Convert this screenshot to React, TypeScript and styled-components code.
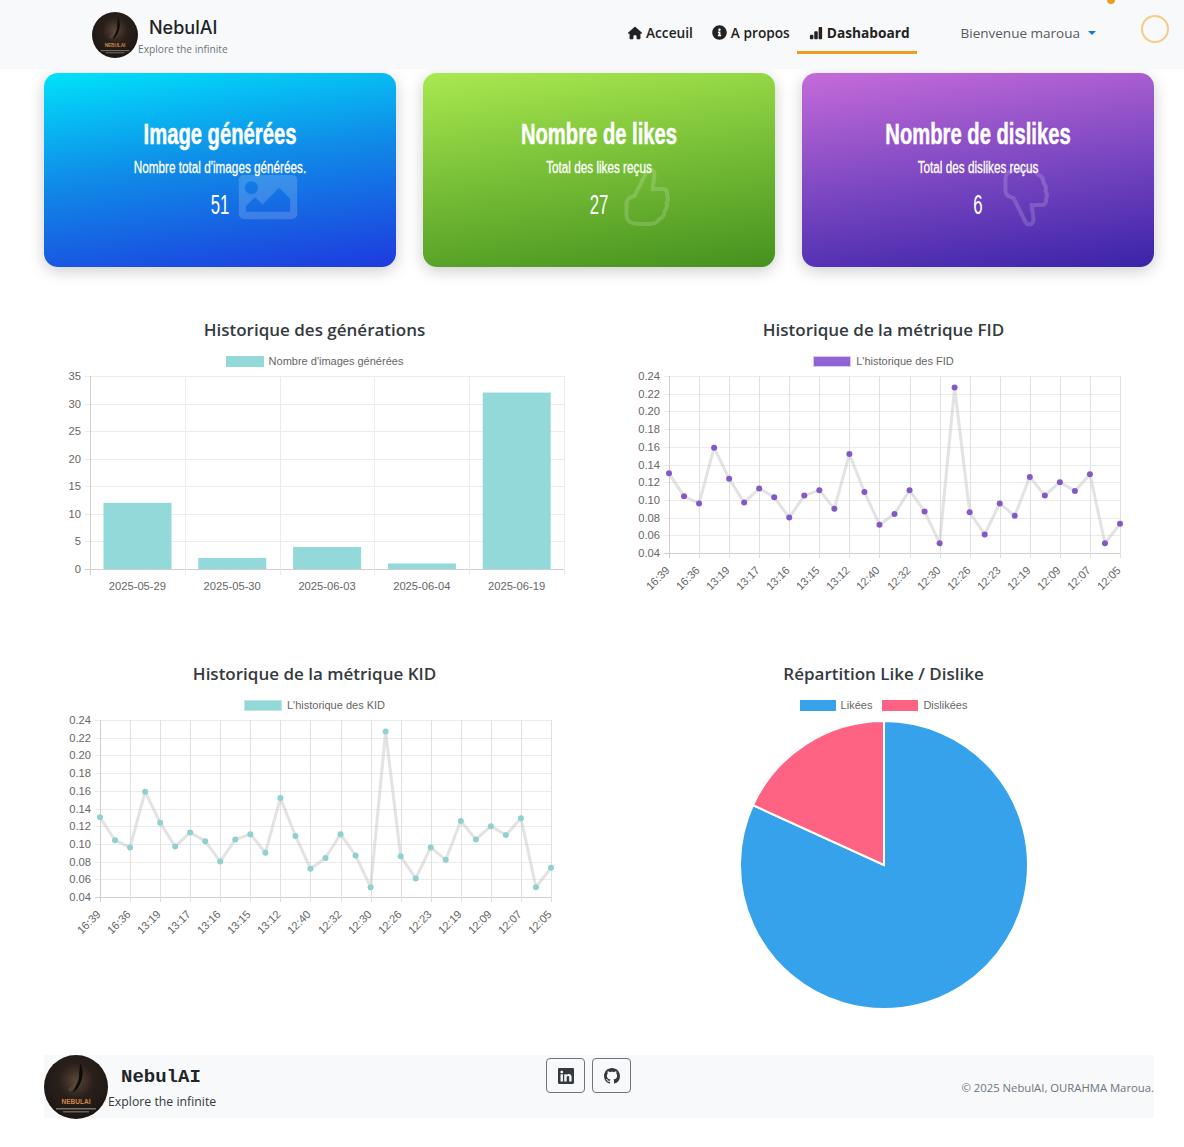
import React from "react";
import styled, { createGlobalStyle } from "styled-components";
import { FaInfoCircle, FaImage } from "react-icons/fa";
import { FaHouse } from "react-icons/fa6";
import { BsLinkedin, BsGithub, BsBarChartFill } from "react-icons/bs";

// #region ##################################################################################### DATA
const METRIC_LABELS = [
  "16:39", "16:36", "13:19", "13:17", "13:16", "13:15", "13:12", "12:40",
  "12:32", "12:30", "12:26", "12:23", "12:19", "12:09", "12:07", "12:05",
];
const METRIC_VALUES = [
  0.13, 0.104, 0.096, 0.159, 0.124, 0.097, 0.113, 0.103, 0.08, 0.105, 0.111, 0.09, 0.152, 0.109,
  0.072, 0.084, 0.111, 0.087, 0.051, 0.227, 0.086, 0.061, 0.096, 0.082, 0.126, 0.105, 0.12, 0.11,
  0.129, 0.051, 0.073,
];
const DAILY = [
  { label: "2025-05-29", value: 12 },
  { label: "2025-05-30", value: 2 },
  { label: "2025-06-03", value: 4 },
  { label: "2025-06-04", value: 1 },
  { label: "2025-06-19", value: 32 },
];
const TEAL = "#94d9d9";
const PURPLE = "#9063d6";
// #endregion

// #region ##################################################################################### STYLES
const GlobalStyle = createGlobalStyle`
  html, body { margin: 0; padding: 0; background: #fff; }
  * { box-sizing: border-box; }
  body { font-family: "Noto Sans", sans-serif; height: 1147px; overflow: hidden; }
`;

const Navbar = styled.nav`
  position: relative;
  height: 69px;
  background: #f8f9fa;
  display: flex;
  align-items: center;
  padding: 0 15px 1px 92px;
  white-space: nowrap;
`;

const Brand = styled.div`
  display: flex;
  align-items: center;
  flex: none;
  width: 524px;
  margin-top: 1px;
`;

const BrandText = styled.div`
  display: flex;
  flex-direction: column;
  align-items: flex-start;
  margin-top: 6px;
`;

const BrandName = styled.span`
  font-family: "Inter", sans-serif;
  font-weight: 500;
  font-size: 18px;
  line-height: 22px;
  color: #212529;
  margin-left: 11px;
`;

const BrandTagline = styled.span`
  font-family: "Open Sans", sans-serif;
  font-size: 10.2px;
  line-height: 20px;
  color: #6c757d;
`;

const NavLinks = styled.div`
  display: flex;
  align-items: stretch;
  flex: none;
  height: 40px;
`;

const NavLink = styled.a<{ $active?: boolean }>`
  display: flex;
  align-items: center;
  gap: 4px;
  padding: 0 7px 0 12px;
  font-family: "Open Sans", sans-serif;
  font-weight: ${(p) => (p.$active ? 700 : 600)};
  font-size: 13.7px;
  color: #222;
  border-bottom: 3px solid ${(p) => (p.$active ? "#f09a1e" : "transparent")};
`;

const Welcome = styled.div`
  display: flex;
  align-items: center;
  gap: 8px;
  flex: none;
  margin: 0 0 3px 44px;
  font-family: "Open Sans", sans-serif;
  font-size: 13.5px;
  color: #555c63;
`;

const Caret = styled.span`
  width: 0;
  height: 0;
  border-left: 4px solid transparent;
  border-right: 4px solid transparent;
  border-top: 4px solid #0d7fd8;
`;

const Ring = styled.span`
  flex: none;
  width: 28px;
  height: 28px;
  margin: 0 0 10px 45px;
  border: 2.5px solid #f5cc84;
  border-radius: 50%;
`;

const OrbitDot = styled.span`
  position: absolute;
  left: 1107px;
  top: -4px;
  width: 8px;
  height: 8px;
  border-radius: 50%;
  background: #f09a1e;
`;

const Page = styled.main`
  padding: 4px 30px 0 44px;
`;

const StatRow = styled.section`
  display: grid;
  grid-template-columns: repeat(3, 352px);
  column-gap: 27px;
`;

const StatCard = styled.article<{ $gradient: string }>`
  height: 194px;
  border-radius: 14px;
  padding-top: 43px;
  color: #fff;
  text-align: center;
  background: ${(p) => p.$gradient};
  box-shadow: 0 4px 16px rgba(0, 0, 0, 0.2);
  font-family: "Liberation Sans", sans-serif;
`;

const StatTitle = styled.h2`
  margin: 0;
  font-size: 30px;
  line-height: 36px;
  font-weight: 700;
  -webkit-text-stroke: 0.5px #fff;
  transform: scaleX(0.674);
`;

const StatNote = styled.p`
  margin: 6px 0 0;
  font-size: 16px;
  line-height: 20px;
  font-weight: 400;
  -webkit-text-stroke: 0.3px #fff;
  transform: scaleX(0.733);
`;

const StatValue = styled.div`
  position: relative;
  margin-top: 9px;
  height: 36px;
`;

const StatDigits = styled.span`
  display: block;
  font-size: 28px;
  line-height: 36px;
  transform: scaleX(0.6);
`;

const StatIcon = styled.span`
  position: absolute;
  left: calc(50% + 48px);
  top: 10px;
  line-height: 0;
  color: rgba(255, 255, 255, 0.17);
  transform: translate(-50%, -50%);
`;

const ChartGrid = styled.section`
  display: grid;
  grid-template-columns: repeat(2, 541px);
  column-gap: 28px;
  grid-auto-rows: 344px;
  margin-top: 50px;
`;

const ChartPanel = styled.figure`
  margin: 0;
  display: flex;
  flex-direction: column;
  align-items: center;
`;

const ChartTitle = styled.figcaption`
  flex: none;
  font-family: "Open Sans", sans-serif;
  font-weight: 600;
  font-size: 17px;
  line-height: 26px;
  color: #343a40;
`;

const Legend = styled.div`
  flex: none;
  display: flex;
  gap: 10px;
  margin-top: 9px;
  height: 18px;
  align-items: center;
  font-family: "Liberation Sans", sans-serif;
  font-size: 11px;
  color: #666;
`;

const LegendItem = styled.span`
  display: flex;
  align-items: center;
  gap: 5px;
`;

const Swatch = styled.i<{ $color: string; $edge?: string; $width?: number }>`
  display: block;
  width: ${(p) => p.$width ?? 38}px;
  height: 11px;
  background: ${(p) => p.$color};
  border: 1px solid ${(p) => p.$edge ?? p.$color};
`;

const Plot = styled.svg`
  display: block;
  font-family: "Liberation Sans", sans-serif;
  font-size: 11.2px;
  flex: none;
`;

const Footer = styled.footer`
  margin: 50px 0 0 44px;
  width: 1110px;
  height: 63px;
  background: #f8f9fa;
  display: flex;
  align-items: flex-start;
`;

const FooterBrand = styled.div`
  display: flex;
  align-items: stretch;
  width: 502px;
`;

const FooterText = styled.div`
  display: flex;
  flex-direction: column;
`;

const FooterName = styled.span`
  font-family: "Liberation Mono", monospace;
  font-weight: 700;
  font-size: 19px;
  line-height: 20px;
  color: #212529;
  margin: 12px 0 0 13px;
`;

const FooterTagline = styled.span`
  font-family: "Open Sans", sans-serif;
  font-size: 12.3px;
  line-height: 20px;
  margin-top: 5px;
  color: #343a40;
`;

const SocialRow = styled.div`
  display: flex;
  gap: 7px;
  margin-top: 3px;
`;

const SocialButton = styled.a`
  width: 39px;
  height: 35px;
  display: flex;
  align-items: center;
  justify-content: center;
  color: #343a40;
  font-size: 16px;
  border: 1px solid #6c757d;
  border-radius: 4px;
`;

const Copyright = styled.span`
  margin-left: auto;
  margin-top: 24px;
  font-family: "Open Sans", sans-serif;
  font-size: 11.3px;
  line-height: 18px;
  color: #6c757d;
`;
// #endregion

// #region ##################################################################################### COMPONENTS
const GRID = "#ebebeb";
const GRID_V = "#e0e0e0";
const AXIS = "#cfcfcf";

const Logo = ({ size, id }: { size: number; id: string }) => (
  <svg width={size} height={size} viewBox="0 0 64 64" style={{ flex: "none" }}>
    <defs>
      <radialGradient id={id} cx="0.5" cy="0.4" r="0.6">
        <stop offset="0" stopColor="#5a4638" />
        <stop offset="0.45" stopColor="#2a201b" />
        <stop offset="1" stopColor="#1b1613" />
      </radialGradient>
    </defs>
    <circle cx="32" cy="32" r="32" fill={`url(#${id})`} />
    <path d="M36 8c5 8 3 22-7 30 4-9 7-20 7-30z" fill="#0d0b0a" />
    <path d="M24 34c5-3 9-9 11-16 1 8-3 15-9 19z" fill="#5a4a3e" opacity="0.7" />
    <text x="32" y="49" textAnchor="middle" fontSize="6.5" fontWeight="700" fontFamily="Liberation Sans, sans-serif" fill="#d2874a">
      NEBULAI
    </text>
    <rect x="12" y="53" width="40" height="1.5" fill="#9a948c" opacity="0.7" />
    <rect x="19" y="56" width="26" height="1.5" fill="#9a948c" opacity="0.6" />
  </svg>
);

const THUMB_PATH =
  "M11 29L22 7C23 4 25 2.500 27 2.500C30 2.500 31 6 31 9L29 22H39C43 22 44 25 43.500 28C45 31 44.500 34 43 36C44 39 43 42 41 44C41 48 39 51 36 52C34 55 30 57 26 57H14C8 57 3 54 3 48V36C3 32 7 30 11 29Z";

const ThumbIcon = ({ down }: { down?: boolean }) => (
  <svg width={47} height={60} viewBox="0 0 47 60" fill="none" stroke="currentColor" strokeWidth={4} strokeLinejoin="round">
    <path d={THUMB_PATH} transform={down ? "matrix(1 0 0 -1 0 60)" : undefined} />
  </svg>
);

const BarPlot = () => {
  const left = 46, right = 520, top = 6, bottom = 199;
  const band = (right - left) / DAILY.length;
  const y = (v: number) => bottom - (v / 35) * (bottom - top);
  return (
    <Plot width={541} height={236} viewBox="0 0 541 236">
      {[0, 5, 10, 15, 20, 25, 30, 35].map((t) => (
        <g key={t}>
          <line x1={left - 5} x2={right} y1={Math.round(y(t)) + 0.5} y2={Math.round(y(t)) + 0.5} stroke={t === 0 ? AXIS : GRID} />
          <text x={left - 9} y={y(t) + 4} textAnchor="end" fill="#666">{t}</text>
        </g>
      ))}
      {DAILY.map((_, i) => (
        <line key={i} x1={Math.round(left + band * i) + 0.5} x2={Math.round(left + band * i) + 0.5} y1={top} y2={bottom + 6} stroke={i === 0 ? AXIS : GRID} />
      ))}
      <line x1={right + 0.5} x2={right + 0.5} y1={top} y2={bottom + 6} stroke={GRID} />
      {DAILY.map((d, i) => (
        <g key={d.label}>
          <rect x={left + band * i + 13.5} y={y(d.value)} width={68} height={bottom - y(d.value)} fill={TEAL} />
          <text x={left + band * i + band / 2} y={bottom + 21} textAnchor="middle" fill="#666">{d.label}</text>
        </g>
      ))}
    </Plot>
  );
};

const LinePlot = ({ color }: { color: string }) => {
  const left = 56, right = 507, top = 6, bottom = 183;
  const step = (right - left) / (METRIC_VALUES.length - 1);
  const x = (i: number) => left + step * i;
  const y = (v: number) => bottom - ((v - 0.04) / 0.2) * (bottom - top);
  const ticks = Array.from({ length: 11 }, (_, i) => 0.04 + i * 0.02);
  return (
    <Plot width={541} height={236} viewBox="0 0 541 236">
      {ticks.map((t) => (
        <g key={t}>
          <line x1={left - 5} x2={right} y1={Math.round(y(t)) + 0.5} y2={Math.round(y(t)) + 0.5} stroke={t < 0.05 ? AXIS : GRID} />
          <text x={left - 9} y={y(t) + 4} textAnchor="end" fill="#666">{t.toFixed(2)}</text>
        </g>
      ))}
      {METRIC_LABELS.map((label, i) => {
        const lx = Math.round(x(i * 2)) + 0.5;
        return (
          <g key={label}>
            <line x1={lx} x2={lx} y1={top} y2={bottom + 5} stroke={i === 0 ? AXIS : GRID_V} />
            <text x={lx + 1} y={bottom + 18} textAnchor="end" fill="#666" transform={`rotate(-45 ${lx + 1} ${bottom + 18})`}>
              {label}
            </text>
          </g>
        );
      })}
      <polyline
        points={METRIC_VALUES.map((v, i) => `${x(i)},${y(v)}`).join(" ")}
        fill="none"
        stroke="rgba(200,200,200,0.5)"
        strokeWidth={3}
      />
      {METRIC_VALUES.map((v, i) => (
        <circle key={i} cx={x(i)} cy={y(v)} r={3} fill={color} />
      ))}
    </Plot>
  );
};

const PiePlot = ({ likes, dislikes }: { likes: number; dislikes: number }) => {
  const cx = 271, cy = 151, r = 144;
  const angle = (dislikes / (likes + dislikes)) * Math.PI * 2;
  const px = cx - r * Math.sin(angle);
  const py = cy - r * Math.cos(angle);
  return (
    <Plot width={541} height={297} viewBox="0 0 541 297">
      <path d={`M${cx} ${cy}L${cx} ${cy - r}A${r} ${r} 0 1 1 ${px} ${py}Z`} fill="#36a2eb" stroke="#fff" strokeWidth={2} />
      <path d={`M${cx} ${cy}L${px} ${py}A${r} ${r} 0 0 1 ${cx} ${cy - r}Z`} fill="#ff6384" stroke="#fff" strokeWidth={2} />
    </Plot>
  );
};

const Dashboard = () => (
  <>
    <GlobalStyle />
    <Navbar>
      <OrbitDot />
      <Brand>
        <Logo size={46} id="nav-logo" />
        <BrandText>
          <BrandName>NebulAI</BrandName>
          <BrandTagline>Explore the infinite</BrandTagline>
        </BrandText>
      </Brand>
      <NavLinks>
        <NavLink><FaHouse size={14} />Acceuil</NavLink>
        <NavLink><FaInfoCircle size={15} />A propos</NavLink>
        <NavLink $active><BsBarChartFill size={14} />Dashaboard</NavLink>
      </NavLinks>
      <Welcome>Bienvenue maroua <Caret /></Welcome>
      <Ring />
    </Navbar>

    <Page>
      <StatRow>
        <StatCard $gradient="linear-gradient(172deg, #00e2fb 0%, #0f8de8 45%, #1e3ade 100%)">
          <StatTitle>Image générées</StatTitle>
          <StatNote>Nombre total d'images générées.</StatNote>
          <StatValue>
            <StatDigits>51</StatDigits>
            <StatIcon><FaImage size={59} /></StatIcon>
          </StatValue>
        </StatCard>
        <StatCard $gradient="linear-gradient(172deg, #a9e950 0%, #76bd36 50%, #45911e 100%)">
          <StatTitle>Nombre de likes</StatTitle>
          <StatNote>Total des likes reçus</StatNote>
          <StatValue>
            <StatDigits>27</StatDigits>
            <StatIcon><ThumbIcon /></StatIcon>
          </StatValue>
        </StatCard>
        <StatCard $gradient="linear-gradient(172deg, #c56bd9 0%, #7d48c2 50%, #3a23a8 100%)">
          <StatTitle>Nombre de dislikes</StatTitle>
          <StatNote>Total des dislikes reçus</StatNote>
          <StatValue>
            <StatDigits>6</StatDigits>
            <StatIcon><ThumbIcon down /></StatIcon>
          </StatValue>
        </StatCard>
      </StatRow>

      <ChartGrid>
        <ChartPanel>
          <ChartTitle>Historique des générations</ChartTitle>
          <Legend><LegendItem><Swatch $color={TEAL} />Nombre d'images générées</LegendItem></Legend>
          <BarPlot />
        </ChartPanel>
        <ChartPanel>
          <ChartTitle>Historique de la métrique FID</ChartTitle>
          <Legend><LegendItem><Swatch $color={PURPLE} $edge="#d9c8f2" />L'historique des FID</LegendItem></Legend>
          <LinePlot color="#8558c8" />
        </ChartPanel>
        <ChartPanel>
          <ChartTitle>Historique de la métrique KID</ChartTitle>
          <Legend><LegendItem><Swatch $color={TEAL} $edge="#c2e6e6" />L'historique des KID</LegendItem></Legend>
          <LinePlot color="#8fd0d0" />
        </ChartPanel>
        <ChartPanel>
          <ChartTitle>Répartition Like / Dislike</ChartTitle>
          <Legend>
            <LegendItem><Swatch $color="#36a2eb" $width={36} />Likées</LegendItem>
            <LegendItem><Swatch $color="#ff6384" $width={36} />Dislikées</LegendItem>
          </Legend>
          <PiePlot likes={27} dislikes={6} />
        </ChartPanel>
      </ChartGrid>
    </Page>

    <Footer>
      <FooterBrand>
        <Logo size={64} id="footer-logo" />
        <FooterText>
          <FooterName>NebulAI</FooterName>
          <FooterTagline>Explore the infinite</FooterTagline>
        </FooterText>
      </FooterBrand>
      <SocialRow>
        <SocialButton><BsLinkedin /></SocialButton>
        <SocialButton><BsGithub /></SocialButton>
      </SocialRow>
      <Copyright>© 2025 NebulAI, OURAHMA Maroua.</Copyright>
    </Footer>
  </>
);
// #endregion

export default Dashboard;
